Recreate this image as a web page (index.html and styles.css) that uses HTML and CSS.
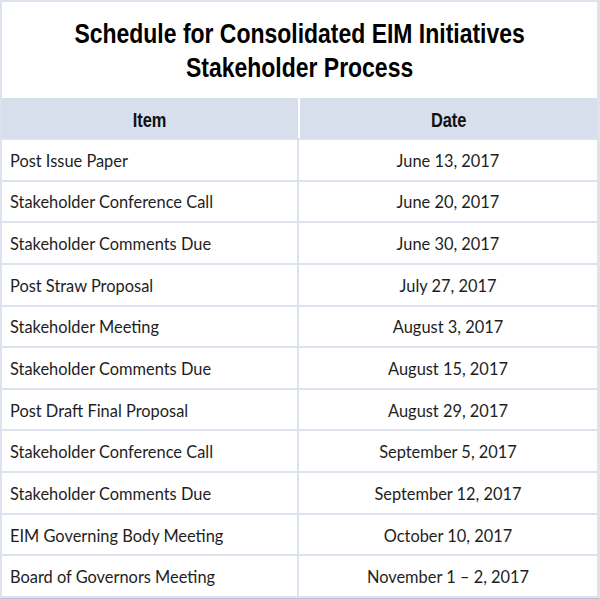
FILE: index.html
```html
<!DOCTYPE html>
<html>
<head>
<meta charset="utf-8">
<link rel="stylesheet" href="styles.css">
</head>
<body>
<div class="sheet">
  <div class="title">
    <div class="title-text">Schedule for Consolidated EIM Initiatives<br>Stakeholder Process</div>
  </div>
  <div class="head">
    <div class="hcell"><span class="htext">Item</span></div>
    <div class="hcell"><span class="htext">Date</span></div>
  </div>
  <div class="body">
    <div class="cell item">Post Issue Paper</div><div class="cell date">June 13, 2017</div>
    <div class="cell item">Stakeholder Conference Call</div><div class="cell date">June 20, 2017</div>
    <div class="cell item">Stakeholder Comments Due</div><div class="cell date">June 30, 2017</div>
    <div class="cell item">Post Straw Proposal</div><div class="cell date">July 27, 2017</div>
    <div class="cell item">Stakeholder Meeting</div><div class="cell date">August 3, 2017</div>
    <div class="cell item">Stakeholder Comments Due</div><div class="cell date">August 15, 2017</div>
    <div class="cell item">Post Draft Final Proposal</div><div class="cell date">August 29, 2017</div>
    <div class="cell item">Stakeholder Conference Call</div><div class="cell date">September 5, 2017</div>
    <div class="cell item">Stakeholder Comments Due</div><div class="cell date">September 12, 2017</div>
    <div class="cell item">EIM Governing Body Meeting</div><div class="cell date">October 10, 2017</div>
    <div class="cell item">Board of Governors Meeting</div><div class="cell date">November 1 – 2, 2017</div>
  </div>
</div>
</body>
</html>
```
FILE: styles.css
```css
html, body {
  margin: 0;
  padding: 0;
  background: #ffffff;
}
.sheet {
  width: 600px;
  height: 599px;
  box-sizing: border-box;
  background: #dce3ee;
  padding: 2px 3px 2px 2px;
  border-bottom: 1px solid #b9c1cc;
  display: flex;
  flex-direction: column;
}
.title {
  height: 96px;
  background: #ffffff;
  display: flex;
  align-items: center;
  justify-content: center;
  flex: none;
}
.title-text {
  font-family: "Liberation Sans Narrow", "Liberation Sans", Arial, sans-serif;
  font-weight: bold;
  font-size: 28px;
  line-height: 34px;
  color: #000;
  text-align: center;
  padding-top: 1px;
  transform: scaleX(0.82);
  white-space: nowrap;
}
.head {
  height: 40px;
  flex: none;
  display: grid;
  grid-template-columns: 296px 1fr;
  column-gap: 2px;
  background: #ffffff;
}
.hcell {
  background: #d6dfeb;
  display: flex;
  align-items: center;
  justify-content: center;
}
.htext {
  font-family: "Liberation Sans Narrow", "Liberation Sans", Arial, sans-serif;
  font-weight: bold;
  font-size: 20px;
  color: #111;
  padding-top: 5px;
  transform: scaleX(0.82);
}
.body {
  flex: 1;
  margin-top: 2px;
  display: grid;
  grid-template-columns: 296px 1fr;
  grid-template-rows: repeat(11, 1fr);
  gap: 2px 1px;
}
.cell {
  background: #ffffff;
  display: flex;
  align-items: center;
  font-family: Lato, "Open Sans", sans-serif;
  font-size: 16.4px;
  color: #1e1e1e;
  padding-top: 1px;
}
.item {
  padding-left: 8px;
  margin-right: 1px;
}
.date {
  justify-content: center;
}
```
